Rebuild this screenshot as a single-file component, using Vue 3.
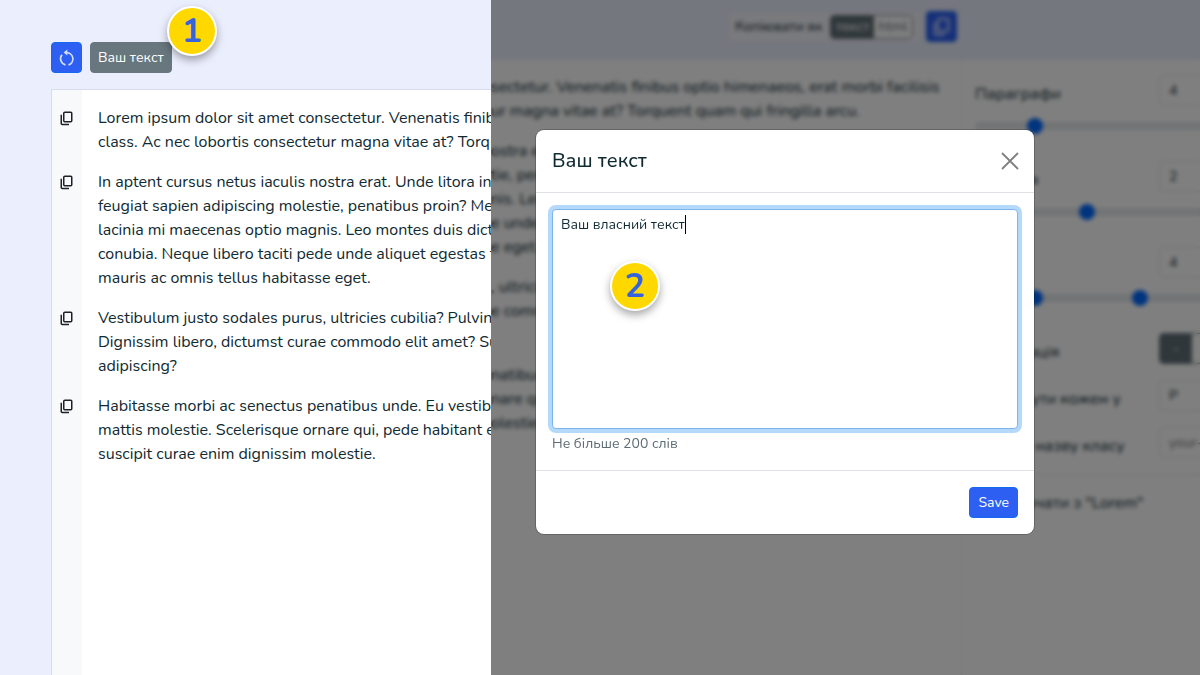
<script setup>
import { ref } from 'vue'

const paragraphs = [
  [
    'Lorem ipsum dolor sit amet consectetur. Venenatis finibus',
    'class. Ac nec lobortis consectetur magna vitae at? Torquent',
  ],
  [
    'In aptent cursus netus iaculis nostra erat. Unde litora in',
    'feugiat sapien adipiscing molestie, penatibus proin? Mer',
    'lacinia mi maecenas optio magnis. Leo montes duis dictum',
    'conubia. Neque libero taciti pede unde aliquet egestas fa',
    'mauris ac omnis tellus habitasse eget.',
  ],
  [
    'Vestibulum justo sodales purus, ultricies cubilia? Pulvinar',
    'Dignissim libero, dictumst curae commodo elit amet? Sus',
    'adipiscing?',
  ],
  [
    'Habitasse morbi ac senectus penatibus unde. Eu vestibulum',
    'mattis molestie. Scelerisque ornare qui, pede habitant eu',
    'suscipit curae enim dignissim molestie.',
  ],
]

const background = [
  [
    'sectetur. Venenatis finibus optio himenaeos, erat morbi facilisis',
    'ur magna vitae at? Torquent quam qui fringilla arcu.',
  ],
  ['ostra er', 'tie, pen', 'nis. Leo', 'e unde', 'e eget.'],
  [', ultrici', 'e comm', '\u00a0'],
  ['natibus', 'nare qu', 'olestie.'],
]

const counts = ref([
  { id: 'paragraphs', label: 'Параграфи', value: 4, thumbs: [20] },
  { id: 'sentences', label: 'Речення', value: 2, thumbs: [40] },
  { id: 'words', label: 'Слова', value: 4, thumbs: [20, 60] },
])

const text = ref('Ваш власний текст')
</script>

<template>
  <main class="stage">
    <section class="pane">
      <div class="toolbar">
        <button class="btn primary square" type="button" aria-label="Оновити">
          <svg width="18" height="18" viewBox="0 0 18 18" fill="none" stroke="currentColor" stroke-width="1.7">
            <path d="M8.500 3.600A6.300 6.300 0 0 1 10.500 15.900" />
            <path d="M7.500 15.900A6.300 6.300 0 0 1 4 5.800" />
            <path d="M9.300.600v6L5.600 3.600z" fill="currentColor" stroke="none" />
          </svg>
        </button>
        <button class="btn secondary" type="button">Ваш текст</button>
        <span class="badge first">1</span>
      </div>
      <div class="sheet">
        <div v-for="(lines, i) in paragraphs" :key="i" class="row">
          <button class="copy" type="button" aria-label="Копіювати">
            <svg width="13" height="15" viewBox="0 0 13 15" fill="none" stroke="currentColor" stroke-width="1.5">
              <rect x="3.750" y="1.250" width="8" height="9.500" rx="1" />
              <path d="M1.250 3.800v8.700a1 1 0 0 0 1 1H9" />
            </svg>
          </button>
          <p><span v-for="line in lines" :key="line">{{ line }}</span></p>
        </div>
      </div>
    </section>

    <section class="pane">
      <div class="behind">
        <div class="topbar">
          <div class="format">
            <span>Копіювати як</span>
            <div class="group">
              <button class="on" type="button">текст</button>
              <button type="button">html</button>
            </div>
          </div>
          <button class="btn primary square" type="button" aria-label="Копіювати все">
            <svg width="17" height="20" viewBox="0 0 13 15" fill="none" stroke="currentColor" stroke-width="1.5">
              <rect x="3.750" y="1.250" width="8" height="9.500" rx="1" />
              <path d="M1.250 3.800v8.700a1 1 0 0 0 1 1H9" />
            </svg>
          </button>
        </div>
        <div class="columns">
          <article class="copytext">
            <p v-for="(lines, i) in background" :key="i">
              <span v-for="line in lines" :key="line">{{ line }}</span>
            </p>
          </article>
          <aside class="settings">
            <div v-for="c in counts" :key="c.id" class="count">
              <div class="field">
                <label :for="c.id">{{ c.label }}</label>
                <input :id="c.id" v-model="c.value" type="text" />
              </div>
              <div class="track">
                <input
                  v-for="(t, n) in c.thumbs"
                  :key="n"
                  v-model="c.thumbs[n]"
                  type="range"
                  min="0"
                  max="100"
                  :aria-label="c.label"
                />
              </div>
            </div>
            <div class="field option">
              <span>Пунктуація</span>
              <div class="group tall">
                <button class="on" type="button">-</button>
                <button type="button">+</button>
              </div>
            </div>
            <div class="field option">
              <label for="wrap">Обгорнути кожен у</label>
              <input id="wrap" type="text" value="P" />
            </div>
            <div class="field option">
              <label for="cls">Додати назву класу</label>
              <input id="cls" type="text" placeholder="your-class" />
            </div>
            <div class="start">Розпочати з "Lorem"</div>
          </aside>
        </div>
      </div>
      <div class="shade"></div>

      <div class="modal" role="dialog" aria-labelledby="title">
        <header>
          <h2 id="title">Ваш текст</h2>
          <button class="close" type="button" aria-label="Закрити">
            <svg width="18" height="18" viewBox="0 0 18 18" stroke="currentColor" stroke-width="1.8" stroke-linecap="round">
              <path d="M1.500 1.500l15 15M16.500 1.500l-15 15" />
            </svg>
          </button>
        </header>
        <div class="body">
          <textarea v-model="text" aria-labelledby="title" aria-describedby="hint"></textarea>
          <span class="caret"></span>
          <span class="badge second">2</span>
          <div id="hint" class="hint">Не більше 200 слів</div>
        </div>
        <footer>
          <button class="btn primary" type="button">Save</button>
        </footer>
      </div>
    </section>
  </main>
</template>

<style>
body {
  overflow: hidden;
}
</style>

<style scoped>
* {
  box-sizing: border-box;
}
.stage {
  display: grid;
  grid-template-columns: minmax(0, 491fr) minmax(0, 709fr);
  height: 100vh;
  font: 16px/24px Nunito, Lato, "Open Sans", sans-serif;
  color: #102a32;
}
button,
input,
textarea {
  font: inherit;
  color: inherit;
}
button {
  cursor: pointer;
}
p {
  margin: 0 0 16px;
  white-space: nowrap;
}
p span {
  display: block;
}
.pane {
  position: relative;
  display: flex;
  flex-direction: column;
  overflow: hidden;
  background: #ebeefd;
}
.toolbar {
  position: relative;
  display: flex;
  gap: 8px;
  padding: 42px 0 16px 51px;
}
.btn {
  display: flex;
  align-items: center;
  justify-content: center;
  height: 31px;
  padding: 0 8px;
  border: 1px solid;
  border-radius: 4px;
  font-size: 14px;
  line-height: 21px;
  color: #fff;
}
.primary {
  background: #2d60f2;
  border-color: #1668f0;
}
.secondary {
  padding: 0 7px;
  background: #68777e;
  border-color: #68777e;
}
.square {
  width: 31px;
  padding: 0;
  color: #d3deff;
}
.badge {
  position: absolute;
  display: flex;
  align-items: center;
  justify-content: center;
  width: 50px;
  height: 50px;
  border: 2px solid #fff;
  border-radius: 50%;
  background: #ffd800;
  box-shadow: 0 4px 8px rgba(0, 0, 0, 0.35);
  color: #3562df;
  font-size: 34px;
  font-weight: 700;
}
.first {
  left: 167px;
  top: 6px;
}
.second {
  left: 74px;
  top: 68px;
}
.sheet {
  flex: 1;
  margin-left: 51px;
  padding-top: 16px;
  border: solid #d9dcec;
  border-width: 1px 0 0 1px;
  background: linear-gradient(90deg, #f8f9fb 30px, #fff 30px);
}
.row {
  display: grid;
  grid-template-columns: 30px 1fr;
  column-gap: 16px;
}
.copy {
  display: flex;
  align-items: center;
  justify-content: center;
  height: 24px;
  padding: 0 2px 0 0;
  border: 0;
  background: none;
  color: #1d2125;
}
.behind {
  display: flex;
  flex: 1;
  flex-direction: column;
}
.topbar {
  display: flex;
  align-items: center;
  gap: 6px;
  height: 60px;
  padding: 0 0 7px 238px;
}
.format {
  display: flex;
  align-items: center;
  justify-content: space-between;
  width: 191px;
  height: 28px;
  padding: 0 7px 0 6px;
  background: #f4f5fb;
  font-size: 14px;
}
.group {
  display: flex;
  height: 24px;
  overflow: hidden;
  border: 1px solid #68777e;
  border-radius: 4px;
}
.group button {
  width: 38px;
  padding: 0;
  border: 0;
  background: #fff;
  color: #68777e;
  font-size: 14px;
  line-height: 20px;
}
.group .on {
  width: 43px;
  background: #5f6e76;
  color: #fff;
}
.columns {
  display: flex;
  flex: 1;
  background: #fff;
}
.copytext {
  flex: none;
  width: 471px;
  padding-top: 15px;
  border-right: 1px solid #ececf4;
}
.settings {
  flex: none;
  width: 290px;
  padding: 15px 0 0 13px;
}
.count {
  height: 86px;
}
.field {
  display: grid;
  grid-template-columns: minmax(0, 1fr) 93px;
  align-items: center;
  height: 31px;
}
.field input {
  width: 100%;
  height: 31px;
  padding: 0 9px;
  border: 1px solid #dee2e6;
  border-radius: 4px;
  background: #fff;
  font-size: 14px;
}
.field label,
.field span {
  padding-top: 6px;
  white-space: nowrap;
}
.track {
  display: grid;
  align-items: center;
  height: 8px;
  margin-top: 16px;
  border-radius: 4px;
  background: #e3e7ea;
}
.track input {
  grid-area: 1 / 1;
  appearance: none;
  width: 100%;
  height: 8px;
  margin: 0;
  background: none;
}
.track input::-webkit-slider-thumb {
  appearance: none;
  width: 16px;
  height: 16px;
  border-radius: 50%;
  background: #0068ff;
}
.option {
  margin-bottom: 16px;
}
.tall {
  height: 31px;
}
.tall .on {
  width: 32px;
}
.start {
  padding: 16px 0 0 15px;
  border-top: 1px solid #dee2e6;
}
.shade {
  position: absolute;
  inset: 0;
  background: rgba(0, 0, 0, 0.5);
  backdrop-filter: blur(2px);
}
.modal {
  position: absolute;
  left: 45px;
  top: 130px;
  width: 498px;
  border-radius: 8px;
  background: #fff;
  box-shadow: 0 0 0 1px rgba(0, 0, 0, 0.2);
}
.modal header {
  display: flex;
  align-items: center;
  justify-content: space-between;
  padding: 16px 15px 16px 16px;
  border-bottom: 1px solid #dee2e6;
}
h2 {
  margin: 0;
  font-size: 20px;
  line-height: 30px;
  font-weight: 500;
}
.close {
  display: flex;
  padding: 0;
  border: 0;
  background: none;
  color: #808080;
}
.body {
  position: relative;
  padding: 16px;
}
textarea {
  display: block;
  width: 100%;
  height: 220px;
  padding: 4px 8px;
  border: 1px solid #7db5f0;
  border-radius: 4px;
  outline: 0;
  box-shadow: 0 0 0 4px #b5d9fb;
  background: #fff;
  font-size: 14px;
  line-height: 21px;
  resize: none;
}
.caret {
  position: absolute;
  left: 149px;
  top: 22px;
  width: 1px;
  height: 19px;
  background: #000;
}
.hint {
  margin-top: 4px;
  color: #5d6c73;
  font-size: 14px;
  line-height: 21px;
}
.modal footer {
  display: flex;
  justify-content: flex-end;
  padding: 16px;
  border-top: 1px solid #dee2e6;
}
</style>
